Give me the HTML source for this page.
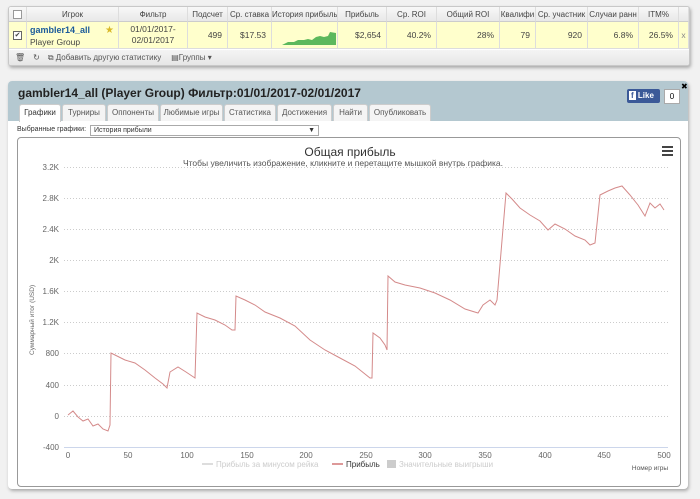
<!DOCTYPE html>
<html><head><meta charset="utf-8"><style>
body{margin:0;width:700px;height:499px;background:#f1f1f1;font-family:"Liberation Sans","DejaVu Sans",sans-serif;position:relative;overflow:hidden}
.a{position:absolute}
.tb{left:8px;top:6px;width:680px;height:58px;background:#fff;border:1px solid #c8c8c8;box-shadow:1px 2px 3px #aaa;border-radius:3px;overflow:hidden}
.c{position:absolute;font-size:8px;color:#444;border-right:1px solid #ddd;box-sizing:border-box}
.h{top:0;height:15px;line-height:15px;text-align:center;background:linear-gradient(#f8f8f8,#e8e8e8);border-bottom:1px solid #ccc;white-space:nowrap;overflow:hidden}
.d{top:15px;height:27px;line-height:27px;text-align:right;padding-right:5px;background:#ffffcc;border-bottom:1px solid #ddd;font-size:8.5px}
.tab{position:absolute;top:104px;height:16px;line-height:16px;font-size:8px;color:#555;background:#f4f4f4;border:1px solid #ccc;border-bottom:none;border-radius:3px 3px 0 0;text-align:center}
</style></head><body>
<div class="a tb">
<div class="c h" style="left:0;width:18px"><span style="display:inline-block;width:7px;height:7px;border:1px solid #999;background:#fff;vertical-align:middle"></span></div>
<div class="c h" style="left:18px;width:92px">Игрок</div>
<div class="c h" style="left:110px;width:69px">Фильтр</div>
<div class="c h" style="left:179px;width:40px">Подсчет</div>
<div class="c h" style="left:219px;width:44px">Ср. ставка</div>
<div class="c h" style="left:263px;width:66px">История прибыль</div>
<div class="c h" style="left:329px;width:49px">Прибыль</div>
<div class="c h" style="left:378px;width:50px">Ср. ROI</div>
<div class="c h" style="left:428px;width:63px">Общий ROI</div>
<div class="c h" style="left:491px;width:36px">Квалифи</div>
<div class="c h" style="left:527px;width:52px">Ср. участник</div>
<div class="c h" style="left:579px;width:51px">Случаи ранн</div>
<div class="c h" style="left:630px;width:40px">ITM%</div>
<div class="c h" style="left:670px;width:10px"></div>
<div class="c d" style="left:0;width:18px;text-align:center;padding:0"><span style="display:inline-block;width:7px;height:7px;border:1px solid #666;background:#fff;vertical-align:middle;font-size:7px;line-height:7px">✔</span></div>
<div class="c d" style="left:18px;width:92px;text-align:left;padding-left:3px;line-height:12px;padding-top:2px"><b style="color:#1a5a9a;font-size:9px">gambler14_all</b><br>Player Group<span style="position:absolute;left:78px;top:3px;color:#d9b92a;font-size:10px">★</span></div>
<div class="c d" style="left:110px;width:69px;text-align:center;padding:2px 0 0;line-height:11px">01/01/2017-<br>02/01/2017</div>
<div class="c d" style="left:179px;width:40px">499</div>
<div class="c d" style="left:219px;width:44px">$17.53</div>
<div class="c d" style="left:263px;width:66px;padding:0"><svg width="66" height="27" style="position:absolute;left:0;top:0"><polygon points="10,23 16,20 22,20 26,18 32,18 36,17 40,18 44,15 48,14 52,15 56,14 58,10 64,11 64,23" fill="#5cb85c"/></svg></div>
<div class="c d" style="left:329px;width:49px">$2,654</div>
<div class="c d" style="left:378px;width:50px">40.2%</div>
<div class="c d" style="left:428px;width:63px">28%</div>
<div class="c d" style="left:491px;width:36px">79</div>
<div class="c d" style="left:527px;width:52px">920</div>
<div class="c d" style="left:579px;width:51px">6.8%</div>
<div class="c d" style="left:630px;width:40px">26.5%</div>
<div class="c d" style="left:670px;width:10px;padding:0;text-align:center;color:#888">x</div>
<div class="a" style="left:0;top:43px;width:680px;height:15px;background:linear-gradient(#f4f4f4,#e6e6e6);font-size:8px;color:#555;line-height:15px"><span style="margin-left:6px">🗑</span><span style="margin-left:8px">↻</span><span style="margin-left:8px">⧉ Добавить другую статистику</span><span style="margin-left:10px">▤Группы ▾</span></div>
</div>

<div class="a" style="left:8px;top:81px;width:680px;height:408px;background:#fff;border-radius:4px;box-shadow:1px 2px 3px #aaa"></div>
<div class="a" style="left:8px;top:81px;width:680px;height:40px;background:#b4c8d0;border-radius:4px 4px 0 0"></div>
<div class="a" style="left:18px;top:86px;font-size:12px;font-weight:bold;color:#222">gambler14_all (Player Group) Фильтр:01/01/2017-02/01/2017</div>
<div class="a" style="left:627px;top:89px;width:33px;height:14px;background:#3b5998;color:#fff;font-size:8px;font-weight:bold;line-height:14px;border-radius:2px"><span style="background:#fff;color:#3b5998;padding:0 2px;margin-left:2px">f</span> Like</div>
<div class="a" style="left:664px;top:89px;width:14px;height:13px;background:#fff;border:1px solid #aaa;font-size:8px;text-align:center;line-height:13px">0</div>
<div class="a" style="left:681px;top:82px;font-size:8px">✖</div>
<div class="tab" style="left:19px;width:40px;background:#fff;height:17px;color:#333">Графики</div>
<div class="tab" style="left:62px;width:42px">Турниры</div>
<div class="tab" style="left:107px;width:50px">Оппоненты</div>
<div class="tab" style="left:160px;width:61px">Любимые игры</div>
<div class="tab" style="left:224px;width:50px">Статистика</div>
<div class="tab" style="left:277px;width:53px">Достижения</div>
<div class="tab" style="left:333px;width:33px">Найти</div>
<div class="tab" style="left:369px;width:60px">Опубликовать</div>
<div class="a" style="left:17px;top:126px;font-size:7px;color:#333">Выбранные графики:</div>
<div class="a" style="left:90px;top:125px;width:224px;height:9px;border:1px solid #aaa;font-size:7px;line-height:9px;padding-left:3px;color:#333">История прибыли<span style="position:absolute;right:3px">▼</span></div>
<div class="a" style="left:17px;top:137px;width:662px;height:348px;border:1px solid #999;border-radius:4px;background:#fff"></div>
<svg class="a" style="left:0;top:0" width="700" height="499">
<text x="350" y="156" font-size="12" fill="#333" text-anchor="middle" font-family="Liberation Sans">Общая прибыль</text>
<text x="343" y="166" font-size="8.5" fill="#555" text-anchor="middle" font-family="Liberation Sans">Чтобы увеличить изображение, кликните и перетащите мышкой внутрь графика.</text>
<g fill="#444"><rect x="662" y="146" width="11" height="2"/><rect x="662" y="150" width="11" height="2"/><rect x="662" y="154" width="11" height="2"/></g>
<g stroke="#ccc" stroke-dasharray="1,2" stroke-width="1">
<line x1="64" x2="668" y1="167.5" y2="167.5"/><line x1="64" x2="668" y1="198.5" y2="198.5"/><line x1="64" x2="668" y1="229.5" y2="229.5"/><line x1="64" x2="668" y1="260.5" y2="260.5"/><line x1="64" x2="668" y1="291.5" y2="291.5"/><line x1="64" x2="668" y1="322.5" y2="322.5"/><line x1="64" x2="668" y1="353.5" y2="353.5"/><line x1="64" x2="668" y1="385.5" y2="385.5"/><line x1="64" x2="668" y1="416.5" y2="416.5"/></g>
<line x1="64" x2="668" y1="447.5" y2="447.5" stroke="#ccd6eb"/>
<g font-size="8" fill="#666" text-anchor="end" font-family="Liberation Sans">
<text x="59" y="170">3.2K</text><text x="59" y="201">2.8K</text><text x="59" y="232">2.4K</text><text x="59" y="263">2K</text><text x="59" y="294">1.6K</text><text x="59" y="325">1.2K</text><text x="59" y="356">800</text><text x="59" y="388">400</text><text x="59" y="419">0</text><text x="59" y="450">-400</text></g>
<g font-size="8" fill="#666" text-anchor="middle" font-family="Liberation Sans">
<text x="68" y="458">0</text><text x="128" y="458">50</text><text x="187" y="458">100</text><text x="247" y="458">150</text><text x="306" y="458">200</text><text x="366" y="458">250</text><text x="425" y="458">300</text><text x="485" y="458">350</text><text x="545" y="458">400</text><text x="604" y="458">450</text><text x="664" y="458">500</text></g>
<text transform="translate(34,355) rotate(-90)" font-size="6.5" fill="#666" font-family="Liberation Sans">Суммарный итог (USD)</text>
<text x="668" y="470" font-size="6.5" fill="#555" text-anchor="end" font-family="Liberation Sans">Номер игры</text>
<g font-size="8" font-family="Liberation Sans">
<line x1="202" x2="213" y1="464" y2="464" stroke="#ddd" stroke-width="2"/><text x="216" y="467" fill="#ccc">Прибыль за минусом рейка</text>
<line x1="332" x2="343" y1="464" y2="464" stroke="#d99" stroke-width="2"/><text x="346" y="467" fill="#333">Прибыль</text>
<rect x="387" y="460" width="9" height="8" fill="#ccc"/><text x="399" y="467" fill="#ccc">Значительные выигрыши</text></g>
<polyline fill="none" stroke="#d48a8a" stroke-width="1" points="68,415 73,411 78,417 83,421 88,419 93,426 98,424 103,429 108,431 110,425 111,353 115,355 125,360 135,363 145,370 155,378 163,384 167,388 170,372 178,367 186,372 195,378 197,313 205,317 215,320 225,325 232,330 235,330 236,296 245,300 255,305 265,312 280,318 295,326 310,340 325,350 340,358 355,366 370,378 372,378 373,333 380,338 385,345 387,350 388,276 395,282 405,285 420,288 435,293 450,300 465,309 478,313 483,305 490,300 495,305 497,300 506,193 512,199 520,208 530,215 540,221 548,230 555,224 565,229 575,236 585,240 590,245 595,243 600,195 608,191 615,188 622,186 630,195 638,205 645,216 650,203 655,208 660,204 664,210"/>
</svg>
</body></html>
